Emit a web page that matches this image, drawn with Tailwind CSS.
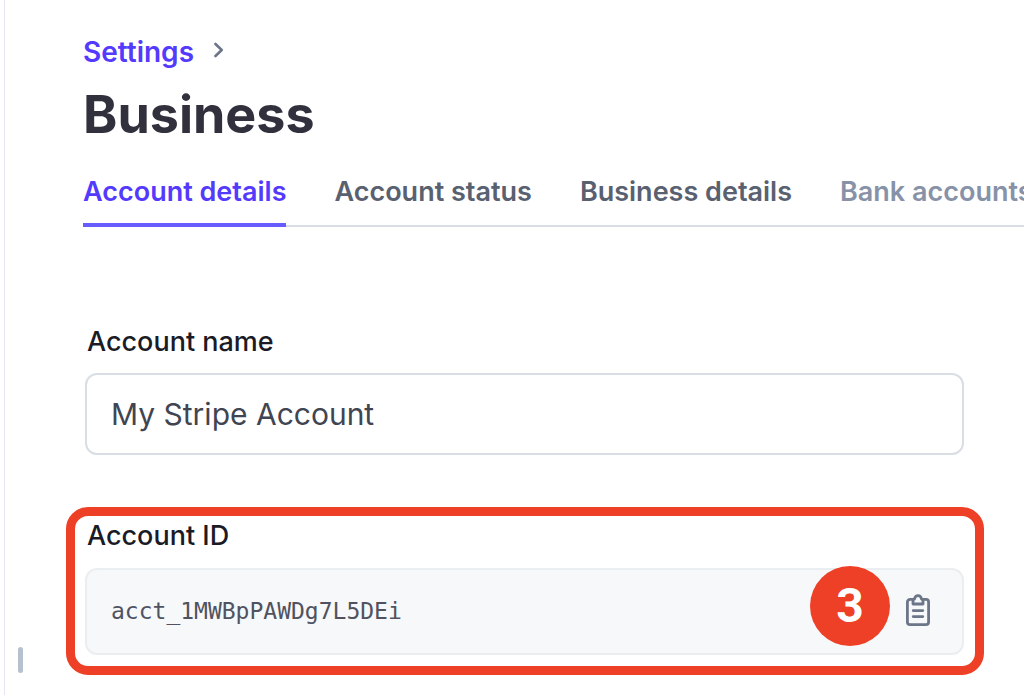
<!DOCTYPE html>
<html lang="en">
<head>
    <meta charset="UTF-8">
    <meta name="viewport" content="width=device-width, initial-scale=1.0">
    <title>Business settings</title>
    <script src="https://cdn.jsdelivr.net/npm/@tailwindcss/browser@4"></script>
</head>
<body class="bg-white font-['Inter',sans-serif] text-[#1a1b25] overflow-hidden">
    <div class="relative ml-1 min-h-screen border-l border-[#e6e6f0] pt-8">
        <!-- sidebar resize handle -->
        <div class="absolute left-[13px] bottom-[22px] w-[5px] h-[26px] rounded-sm bg-[#b6c1cf]"></div>

        <header class="pl-[78px]">
            <nav aria-label="Breadcrumb" class="flex items-center gap-5 h-10">
                <a href="#" class="text-[28px] leading-10 font-semibold text-[#533afd]">Settings</a>
                <svg class="w-[10px] h-4 -mt-1" viewBox="0 0 10 16" fill="none" stroke="#6c7688" stroke-width="2.6" stroke-linecap="round" stroke-linejoin="round" aria-hidden="true">
                    <path d="M1.500 2l6.200 6-6.200 6"/>
                </svg>
            </nav>
            <h1 class="mt-2 text-[52px] leading-[70px] font-bold text-[#30313d]">Business</h1>
            <nav aria-label="Business settings" class="mt-4 flex gap-12 border-b-2 border-[#d8dee4] text-[27px] leading-[52px] font-semibold whitespace-nowrap text-[#596171]">
                <a href="#" aria-current="page" class="-mb-[2px] h-[61px] border-b-4 border-[#675dff] text-[#533afd]">Account details</a>
                <a href="#">Account status</a>
                <a href="#">Business details</a>
                <a href="#" class="text-[#8792a8]">Bank accounts</a>
            </nav>
        </header>

        <form class="mt-[95px] pl-[61px] pr-10">
            <div class="pl-[19px] pr-5">
                <label for="account-name" class="block pl-[2px] text-[27px] leading-10 font-medium">Account name</label>
                <input id="account-name" type="text" value="My Stripe Account" class="mt-[11px] block w-full h-[82px] rounded-xl border-2 border-[#d8dee4] bg-white px-6 text-[30px] text-[#414552]">
            </div>

            <div class="mt-[52px] rounded-[22px] border-[9px] border-[#ed4027] pl-[10px] pr-[11px] pb-[11px]">
                <label for="account-id" class="block pl-[2px] text-[27px] leading-10 font-medium">Account ID</label>
                <div class="relative mt-3 flex items-center rounded-xl border-2 border-[#ebeef1] bg-[#f6f8fa] h-[87px] pl-6 pr-8">
                    <input id="account-id" type="text" readonly value="acct_1MWBpPAWDg7L5DEi" class="grow min-w-0 font-['DejaVu_Sans_Mono',monospace] text-[23px] text-[#50535f]">
                    <span class="absolute right-[72px] -top-1 flex items-center justify-center size-20 rounded-full bg-[#ed4027] font-['Roboto',sans-serif] text-[48px] leading-none font-bold text-white">3</span>
                    <button type="button" aria-label="Copy account ID" class="-mt-1">
                        <svg class="w-[24px] h-[32px]" viewBox="0 0 24 32" fill="none" stroke="#6c7688" stroke-width="2.8" stroke-linejoin="round" stroke-linecap="round" aria-hidden="true">
                            <path d="M7 5.400H4A2.600 2.600 0 0 0 1.400 8v20A2.600 2.600 0 0 0 4 30.600h16a2.600 2.600 0 0 0 2.600-2.600V8A2.600 2.600 0 0 0 20 5.400h-3"/>
                            <path d="M7 10V6.400a1.400 1.400 0 0 1 1.400-1.200C8.800 3 10.200 1.600 12 1.600s3.200 1.400 3.600 3.600A1.400 1.400 0 0 1 17 6.400V10z"/>
                            <path d="M7.200 16.600h9.600M7.200 22.600h9.600"/>
                        </svg>
                    </button>
                </div>
            </div>
        </form>
    </div>
</body>
</html>
